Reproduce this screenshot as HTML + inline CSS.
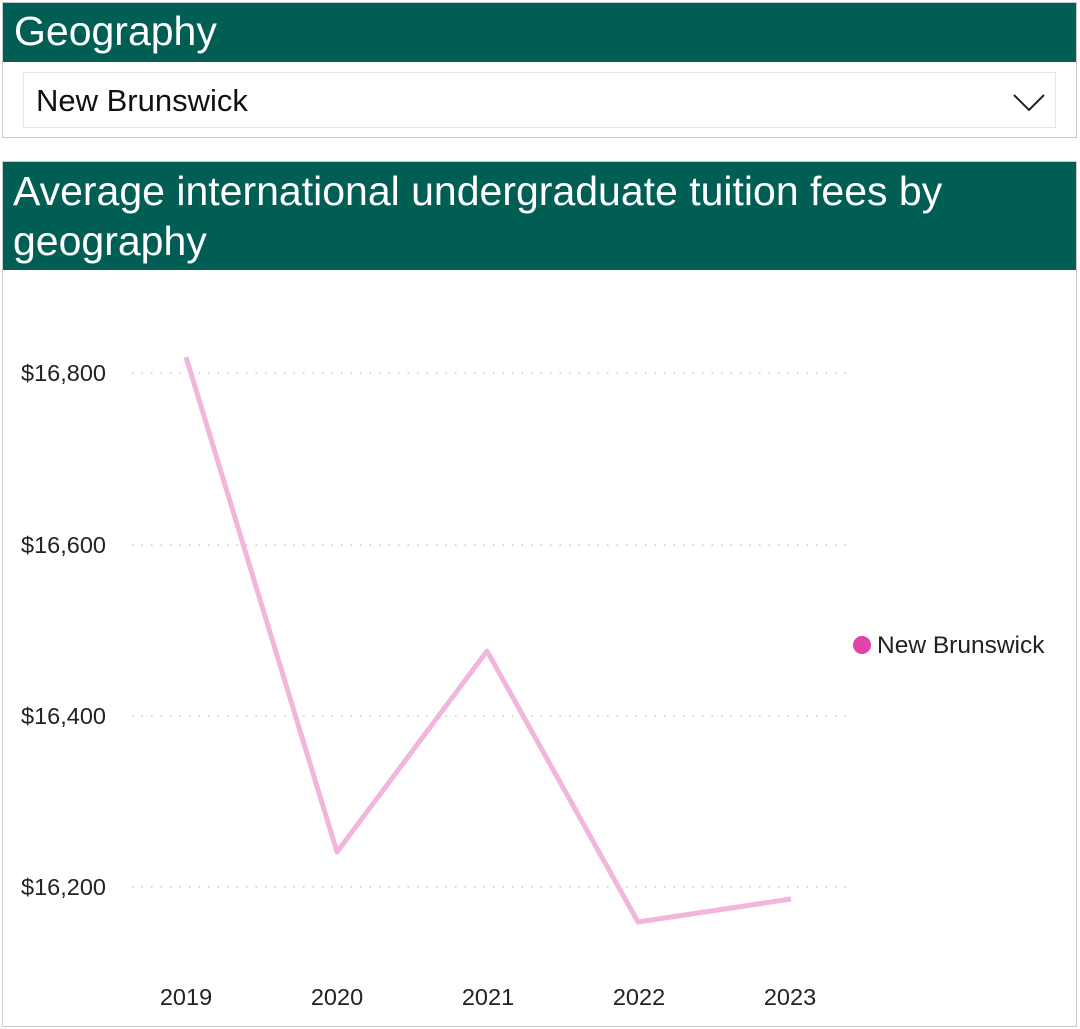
<!DOCTYPE html>
<html><head><style>
body{margin:0;width:1080px;height:1029px;background:#fff;font-family:"Liberation Sans",sans-serif;position:relative;overflow:hidden}
.box{position:absolute;border:1px solid #c8c8c8;box-sizing:border-box;background:#fff}
.hd{position:absolute;left:0;right:0;top:0;background:#005e55;color:#fff}
</style></head><body>
<div class="box" style="left:2px;top:2px;width:1075px;height:136px">
 <div class="hd" style="height:59px;font-size:41px;padding-left:11px;line-height:56px">Geography</div>
 <div style="position:absolute;left:20px;top:69px;width:1033px;height:56px;border:1px solid #e6e6e6;box-sizing:border-box;font-size:31px;line-height:56px;padding-left:12px;color:#111">New Brunswick</div>
 <svg style="position:absolute;left:1009px;top:89px" width="36" height="22"><path d="M2 3 L17 18 L32 3" fill="none" stroke="#222" stroke-width="2"/></svg>
</div>
<div class="box" style="left:2px;top:161px;width:1075px;height:866px">
 <div class="hd" style="height:108px;font-size:41px;padding:4px 0 0 10px;line-height:50px;box-sizing:border-box">Average international undergraduate tuition fees by<br>geography</div>
</div>
<svg style="position:absolute;left:0;top:0" width="1080" height="1029">
 <g stroke="#c8c8c8" stroke-width="1.5" stroke-dasharray="1.5 8">
  <line x1="132" y1="373" x2="850" y2="373"/><line x1="132" y1="545" x2="850" y2="545"/>
  <line x1="132" y1="716" x2="850" y2="716"/><line x1="132" y1="887" x2="850" y2="887"/>
 </g>
 <g font-size="23.5" fill="#222" text-anchor="end">
  <text x="106" y="381">$16,800</text><text x="106" y="553">$16,600</text>
  <text x="106" y="724">$16,400</text><text x="106" y="895">$16,200</text>
 </g>
 <g font-size="23.5" fill="#222" text-anchor="middle">
  <text x="186" y="1005">2019</text><text x="337" y="1005">2020</text><text x="488" y="1005">2021</text><text x="639" y="1005">2022</text><text x="790" y="1005">2023</text>
 </g>
 <polyline points="186,357 337,852 487,651 638,922 791,899" fill="none" stroke="#f2b6dd" stroke-width="5" stroke-linejoin="round"/>
 <circle cx="862" cy="645" r="9" fill="#e044a7"/>
 <text x="877" y="653" font-size="24.5" fill="#222">New Brunswick</text>
</svg>
</body></html>
